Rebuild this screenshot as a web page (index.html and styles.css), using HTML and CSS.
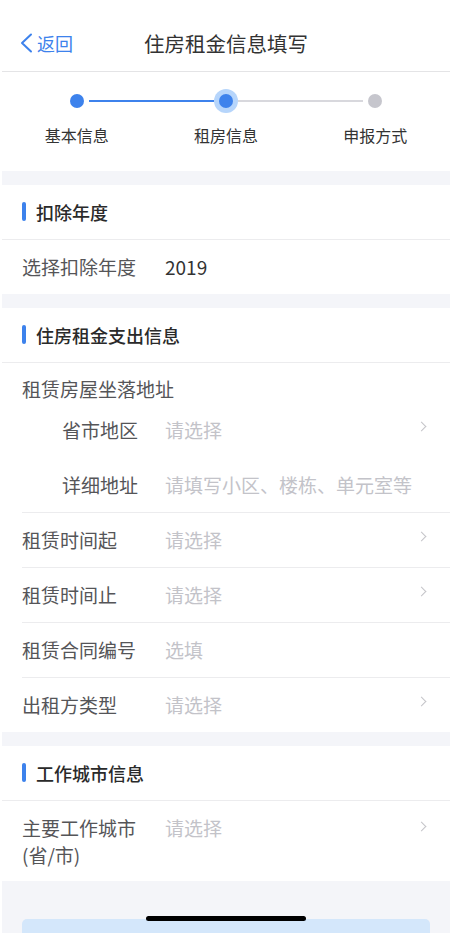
FILE: index.html
```html
<!DOCTYPE html>
<html lang="zh-CN">
<head>
<meta charset="utf-8">
<title>住房租金信息填写</title>
<link rel="stylesheet" href="styles.css">
</head>
<body>
<div class="page">
  <div class="status"></div>
  <header class="navbar">
    <a class="back">
      <svg class="back-icon" width="14" height="20" viewBox="0 0 14 20"><polyline points="11,1.5 2,10 11,18.5" fill="none" stroke="#3d82ec" stroke-width="2" stroke-linecap="round" stroke-linejoin="round"/></svg>
      <span>返回</span>
    </a>
    <h1 class="nav-title">住房租金信息填写</h1>
  </header>

  <section class="stepper">
    <div class="track">
      <span class="dot-wrap"><span class="dot"></span></span>
      <span class="line line-done"></span>
      <span class="dot-wrap"><span class="dot dot-current"></span></span>
      <span class="line"></span>
      <span class="dot-wrap"><span class="dot dot-todo"></span></span>
    </div>
    <div class="step-labels">
      <span>基本信息</span>
      <span>租房信息</span>
      <span>申报方式</span>
    </div>
  </section>

  <div class="gap"></div>

  <section class="group">
    <div class="group-head"><span class="bar"></span>扣除年度</div>
    <div class="row last">
      <span class="label">选择扣除年度</span>
      <span class="value">2019</span>
    </div>
  </section>

  <div class="gap"></div>

  <section class="group">
    <div class="group-head"><span class="bar"></span>住房租金支出信息</div>
    <div class="address">
      <div class="address-title">租赁房屋坐落地址</div>
      <div class="sub-row">
        <span class="sub-label">省市地区</span>
        <span class="value placeholder">请选择</span>
        <span class="chev"></span>
      </div>
      <div class="sub-row">
        <span class="sub-label">详细地址</span>
        <span class="value placeholder">请填写小区、楼栋、单元室等</span>
      </div>
    </div>
    <div class="row">
      <span class="label">租赁时间起</span>
      <span class="value placeholder">请选择</span>
      <span class="chev"></span>
    </div>
    <div class="row">
      <span class="label">租赁时间止</span>
      <span class="value placeholder">请选择</span>
      <span class="chev"></span>
    </div>
    <div class="row">
      <span class="label">租赁合同编号</span>
      <span class="value placeholder">选填</span>
    </div>
    <div class="row last">
      <span class="label">出租方类型</span>
      <span class="value placeholder">请选择</span>
      <span class="chev"></span>
    </div>
  </section>

  <div class="gap"></div>

  <section class="group">
    <div class="group-head"><span class="bar"></span>工作城市信息</div>
    <div class="row tall last">
      <span class="label">主要工作城市<br>(省/市)</span>
      <span class="value placeholder">请选择</span>
      <span class="chev"></span>
    </div>
  </section>

  <div class="footer">
    <div class="notice"></div>
  </div>
</div>
<div class="home-indicator"></div>
</body>
</html>
```

FILE: styles.css
```css
* { box-sizing: border-box; margin: 0; padding: 0; }

html, body {
  background: #ffffff;
}

body {
  font-family: "Noto Sans CJK SC", "Noto Sans", sans-serif;
  color: #333333;
  width: 452px;
  height: 933px;
  overflow: hidden;
}

.page {
  padding: 0 2px;
  background: #ffffff;
}

.status {
  height: 16px;
}

.navbar {
  height: 56px;
  border-bottom: 1px solid #e4e4e6;
  display: flex;
  align-items: center;
  justify-content: center;
  position: relative;
  padding-bottom: 1px;
}

.back {
  position: absolute;
  left: 18px;
  top: 0;
  bottom: 2px;
  display: flex;
  align-items: center;
  gap: 3px;
  color: #3d82ec;
  font-size: 18px;
  line-height: 24px;
}

.back-icon {
  display: block;
}

.nav-title {
  font-size: 20.5px;
  font-weight: 400;
  line-height: 28px;
  color: #333333;
  letter-spacing: 0;
}

.stepper {
  padding: 17px 0 24px;
}

.track {
  display: flex;
  align-items: center;
  padding: 0 63px;
  height: 24px;
}

.dot-wrap {
  width: 24px;
  height: 24px;
  display: flex;
  align-items: center;
  justify-content: center;
  flex: none;
}

.dot {
  width: 14px;
  height: 14px;
  border-radius: 50%;
  background: #3d82ec;
}

.dot-current {
  box-shadow: 0 0 0 5px #b6d5fb;
}

.dot-todo {
  background: #c6c6cd;
}

.line {
  flex: 1;
  height: 1.5px;
  background: #d8d8dd;
}

.line-done {
  background: #3d82ec;
}

.step-labels {
  display: grid;
  grid-template-columns: 1fr 1fr 1fr;
  margin-top: 11px;
  padding-bottom: 1px;
  text-align: center;
  font-size: 16px;
  line-height: 22px;
  color: #333333;
}

.gap {
  height: 14px;
  background: #f4f5f9;
}

.group-head {
  height: 55px;
  border-bottom: 1px solid #ececee;
  display: flex;
  align-items: center;
  padding-left: 20px;
  padding-bottom: 1px;
  font-size: 18px;
  font-weight: 500;
  color: #2a2a2a;
  line-height: 24px;
}

.bar {
  width: 4px;
  height: 19px;
  border-radius: 2px;
  background: #3d82ec;
  margin-right: 10px;
}

.row, .address {
  margin-left: 20px;
  border-bottom: 1px solid #ececee;
}

.row {
  height: 55px;
  display: flex;
  align-items: center;
  padding-bottom: 2px;
  font-size: 19px;
  line-height: 27px;
}

.row.last {
  border-bottom: none;
  height: 54px;
}

.row.tall {
  height: 80px;
  align-items: flex-start;
  padding-top: 13px;
  padding-bottom: 0;
}

.label {
  width: 120px;
  margin-right: 23px;
  color: #555558;
  flex: none;
}

.value {
  flex: 1;
  color: #333333;
}

.placeholder {
  color: #c3c3c9;
}

.chev {
  width: 7px;
  height: 7px;
  border-top: 1.3px solid #c4c4c9;
  border-right: 1.3px solid #c4c4c9;
  transform: rotate(45deg);
  margin-right: 25px;
  margin-top: -6px;
  flex: none;
}

.row.tall .chev {
  margin-top: 9px;
}

.address {
  padding-top: 12px;
  font-size: 19px;
  line-height: 27px;
}

.address-title {
  color: #555558;
}

.sub-row {
  height: 55px;
  display: flex;
  align-items: center;
  padding-bottom: 1px;
}

.sub-label {
  width: 80px;
  margin-left: 40px;
  margin-right: 23px;
  color: #555558;
  flex: none;
}

.footer {
  background: #f4f5f9;
  height: 60px;
  padding: 38px 20px 0;
}

.notice {
  height: 40px;
  border-radius: 5px;
  background: #d4e7fb;
}

.home-indicator {
  position: fixed;
  left: 146px;
  top: 916px;
  width: 160px;
  height: 5px;
  border-radius: 3px;
  background: #000000;
}
```
